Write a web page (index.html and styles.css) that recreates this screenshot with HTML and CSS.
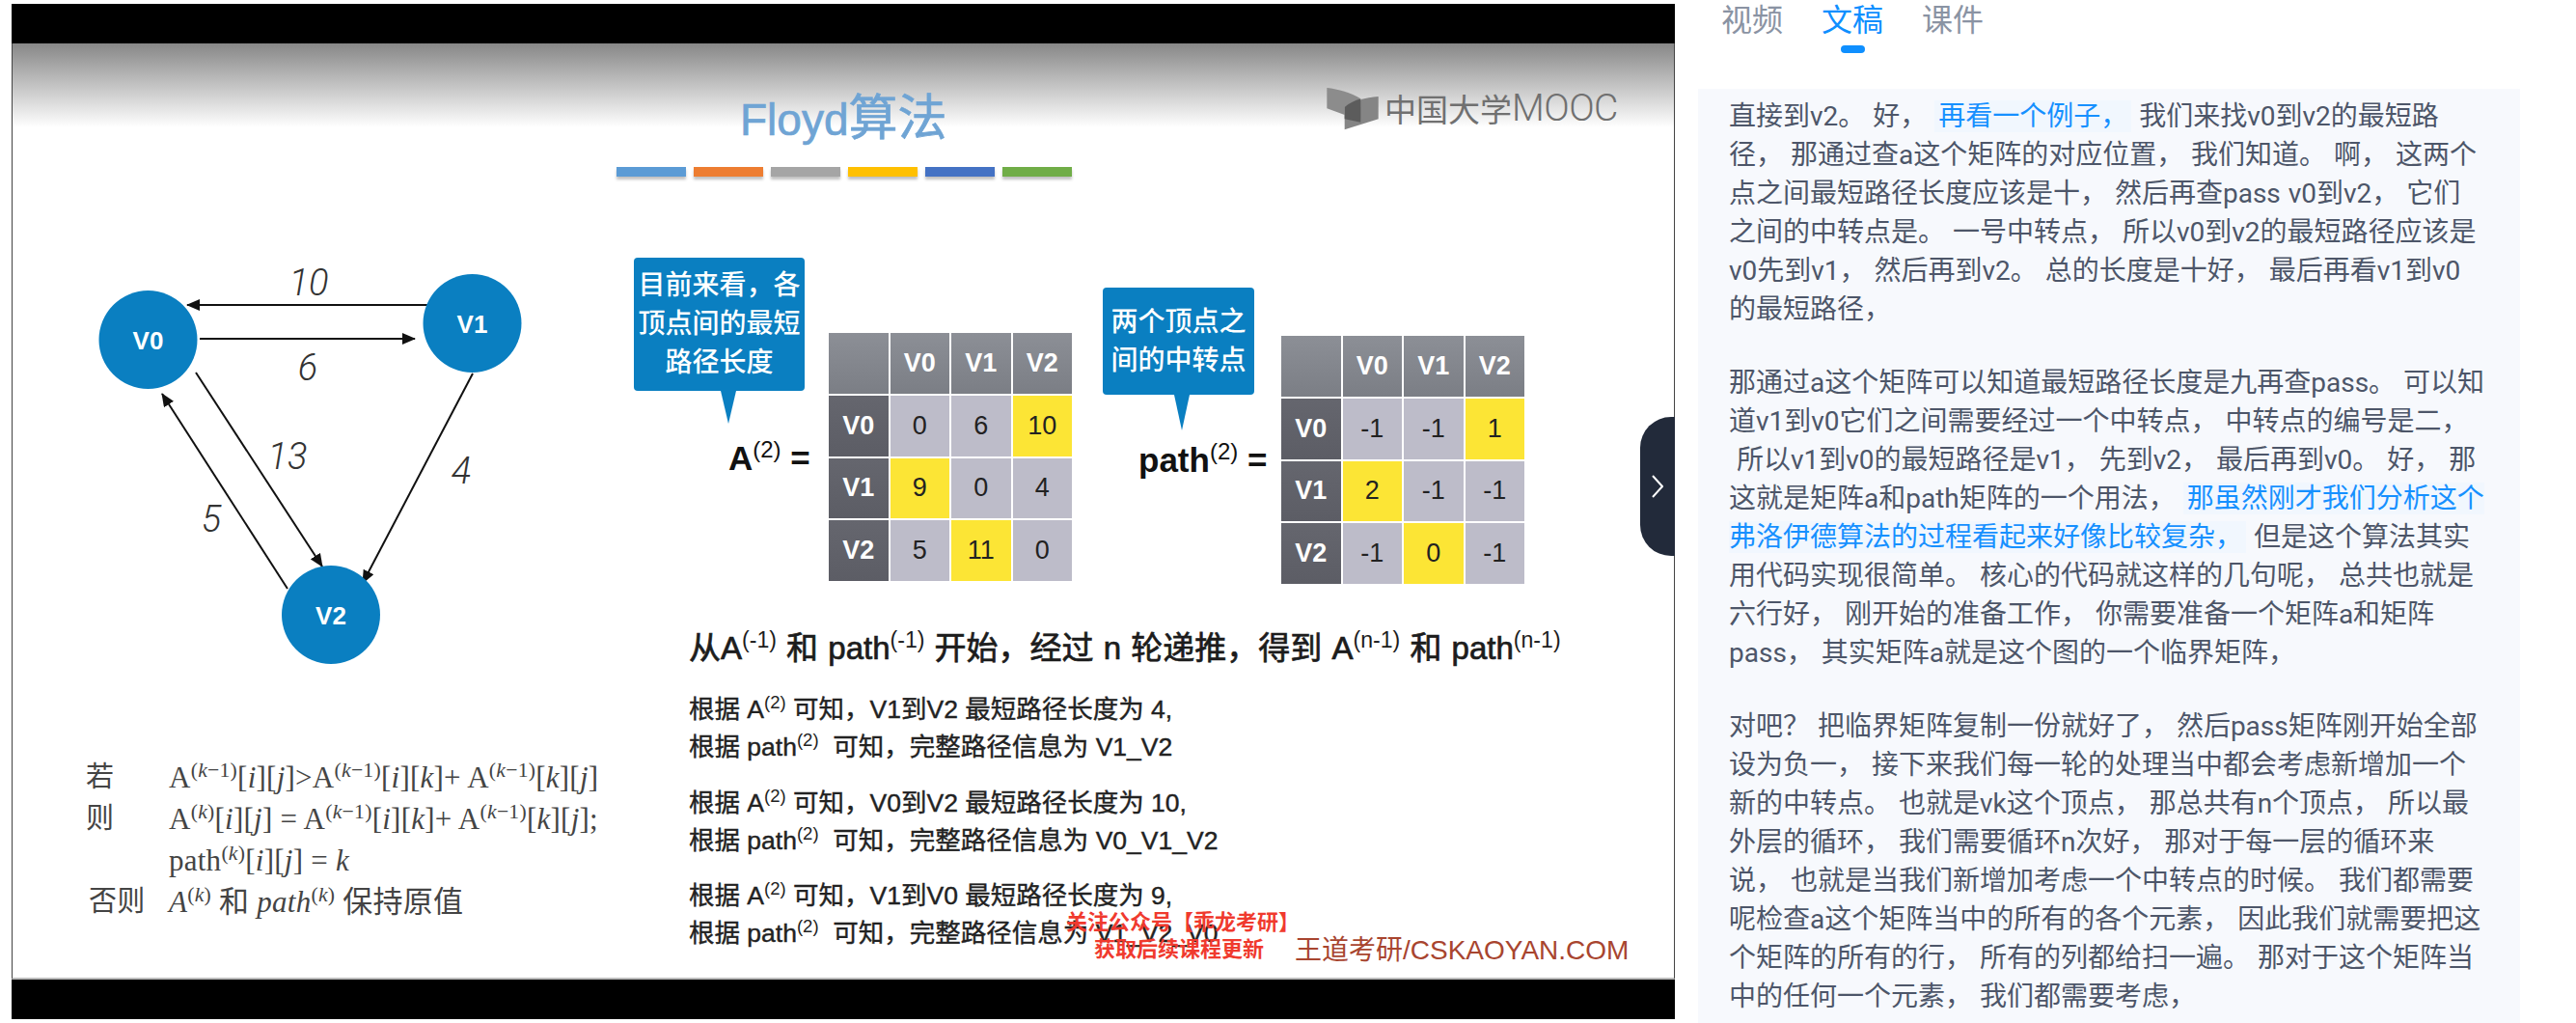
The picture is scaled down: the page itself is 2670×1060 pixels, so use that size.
FILE: index.html
```html
<!DOCTYPE html>
<html lang="zh-CN">

<head>
  <meta charset="UTF-8" />
  <title>Floyd算法 | 文稿</title>
  <link rel="stylesheet" href="styles.css">
</head>

<body>
  <div class="page">
    <div class="video">
      <div class="black-bar"></div>
      <div class="slide">
        <div class="title">Floyd<span class="title-cn">算法</span></div>
        <div class="stripes">
          <span class="stripe s-blue"></span>
          <span class="stripe s-orange"></span>
          <span class="stripe s-gray"></span>
          <span class="stripe s-yellow"></span>
          <span class="stripe s-navy"></span>
          <span class="stripe s-green"></span>
        </div>

        <div class="logo">
          <svg class="logo-icon" viewBox="45 55 160 135" width="54" height="45">
            <path d="M45 58 C80 62 120 72 150 92 L100 118 L100 142 L45 122 Z" fill="#8c8c8c" />
            <path d="M205 85 L205 155 L100 188 L100 118 C125 100 165 88 205 85 Z" fill="#858585" />
            <path d="M100 118 C115 106 132 97 150 92 L150 165 L100 155 Z" fill="#5c5c5c" />
          </svg>
          <span class="logo-cn">中国大学</span><span class="logo-en">MOOC</span>
        </div>

        <!-- graph: viewBox uses the same numbers as the screen -->
        <svg class="graph" viewBox="90 270 460 430" width="460" height="430">
          <defs>
            <marker id="head" viewBox="0 0 14 12" refX="13" refY="6" markerWidth="14" markerHeight="12"
              markerUnits="userSpaceOnUse" orient="auto">
              <path d="M0 0 L14 6 L0 12 Z" fill="#111" />
            </marker>
          </defs>
          <line class="edge" x1="445" y1="316" x2="194" y2="316" marker-end="url(#head)" />
          <line class="edge" x1="207" y1="351" x2="430" y2="351" marker-end="url(#head)" />
          <line class="edge" x1="203" y1="386" x2="334" y2="587" marker-end="url(#head)" />
          <line class="edge" x1="490" y1="387" x2="376" y2="604" marker-end="url(#head)" />
          <line class="edge" x1="298" y1="610" x2="168" y2="408" marker-end="url(#head)" />
          <circle class="node" cx="153.5" cy="352" r="51" />
          <circle class="node" cx="489.5" cy="335" r="51" />
          <circle class="node" cx="343" cy="637" r="51" />
          <text class="node-text" x="153.5" y="362">V0</text>
          <text class="node-text" x="489.5" y="345">V1</text>
          <text class="node-text" x="343" y="647">V2</text>
          <text class="weight" x="320" y="306">10</text>
          <text class="weight" x="319" y="394">6</text>
          <text class="weight" x="298" y="486">13</text>
          <text class="weight" x="478" y="501">4</text>
          <text class="weight" x="219" y="551">5</text>
        </svg>

        <div class="callout callout-a">
          <div>目前来看，各<br>顶点间的最短<br>路径长度</div>
        </div>
        <div class="callout callout-b">
          <div>两个顶点之<br>间的中转点</div>
        </div>

        <div class="eq eq-a">A<sup>(2)</sup> =</div>
        <div class="eq eq-path">path<sup>(2)</sup> =</div>

        <div class="matrix matrix-a">
          <div class="head"></div><div class="head">V0</div><div class="head">V1</div><div class="head">V2</div>
          <div class="side-head">V0</div><div class="cell">0</div><div class="cell">6</div><div class="cell hit">10</div>
          <div class="side-head">V1</div><div class="cell hit">9</div><div class="cell">0</div><div class="cell">4</div>
          <div class="side-head">V2</div><div class="cell">5</div><div class="cell hit">11</div><div class="cell">0</div>
        </div>
        <div class="matrix matrix-path">
          <div class="head"></div><div class="head">V0</div><div class="head">V1</div><div class="head">V2</div>
          <div class="side-head">V0</div><div class="cell">-1</div><div class="cell">-1</div><div class="cell hit">1</div>
          <div class="side-head">V1</div><div class="cell hit">2</div><div class="cell">-1</div><div class="cell">-1</div>
          <div class="side-head">V2</div><div class="cell">-1</div><div class="cell hit">0</div><div class="cell">-1</div>
        </div>

        <div class="headline">从A<sup>(-1)</sup> 和 path<sup>(-1)</sup> 开始，经过 n 轮递推，得到 A<sup>(n-1)</sup> 和 path<sup>(n-1)</sup></div>

        <div class="steps">
          <p>根据 A<sup>(2)</sup> 可知，V1到V2 最短路径长度为 4,<br>根据 path<sup>(2)</sup> &nbsp;可知，完整路径信息为 V1_V2</p>
          <p>根据 A<sup>(2)</sup> 可知，V0到V2 最短路径长度为 10,<br>根据 path<sup>(2)</sup> &nbsp;可知，完整路径信息为 V0_V1_V2</p>
          <p>根据 A<sup>(2)</sup> 可知，V1到V0 最短路径长度为 9,<br>根据 path<sup>(2)</sup> &nbsp;可知，完整路径信息为 V1_V2_V0</p>
        </div>

        <div class="formula">
          <div class="f-label">若</div>
          <div>A<sup>(<i>k</i>−1)</sup>[<i>i</i>][<i>j</i>]&gt;A<sup>(<i>k</i>−1)</sup>[<i>i</i>][<i>k</i>]+ A<sup>(<i>k</i>−1)</sup>[<i>k</i>][<i>j</i>]</div>
          <div class="f-label">则</div>
          <div>A<sup>(<i>k</i>)</sup>[<i>i</i>][<i>j</i>] = A<sup>(<i>k</i>−1)</sup>[<i>i</i>][<i>k</i>]+ A<sup>(<i>k</i>−1)</sup>[<i>k</i>][<i>j</i>];</div>
          <div class="f-label"></div>
          <div>path<sup>(<i>k</i>)</sup>[<i>i</i>][<i>j</i>] = <i>k</i></div>
          <div class="f-label f-else">否则</div>
          <div><i>A</i><sup>(<i>k</i>)</sup> 和 <i>path</i><sup>(<i>k</i>)</sup> 保持原值</div>
        </div>

        <div class="notice">关注公众号【乖龙考研】<br>获取后续课程更新</div>
        <div class="site">王道考研/CSKAOYAN.COM</div>
      </div>
      <div class="black-bar"></div>

      <div class="collapse">
        <svg viewBox="0 0 12 24" width="12" height="24">
          <path d="M1 1 L11 12 L1 23" fill="none" stroke="#fff" stroke-width="2" />
        </svg>
      </div>
    </div>

    <div class="side">
      <div class="tabs">
        <div class="tab">视频</div>
        <div class="tab active">文稿<span class="tab-mark"></span></div>
        <div class="tab">课件</div>
      </div>

      <div class="transcript">
        <p>直接到v2。 好， <span class="mark">再看一个例子，</span> 我们来找v0到v2的最短路<br>
          径， 那通过查a这个矩阵的对应位置， 我们知道。 啊， 这两个<br>
          点之间最短路径长度应该是十， 然后再查pass v0到v2， 它们<br>
          之间的中转点是。 一号中转点， 所以v0到v2的最短路径应该是<br>
          v0先到v1， 然后再到v2。 总的长度是十好， 最后再看v1到v0<br>
          的最短路径，</p>
        <p>那通过a这个矩阵可以知道最短路径长度是九再查pass。 可以知<br>
          道v1到v0它们之间需要经过一个中转点， 中转点的编号是二，<br>
          &nbsp;所以v1到v0的最短路径是v1， 先到v2， 最后再到v0。 好， 那<br>
          这就是矩阵a和path矩阵的一个用法， <span class="mark">那虽然刚才我们分析这个<br>
          弗洛伊德算法的过程看起来好像比较复杂，</span> 但是这个算法其实<br>
          用代码实现很简单。 核心的代码就这样的几句呢， 总共也就是<br>
          六行好， 刚开始的准备工作， 你需要准备一个矩阵a和矩阵<br>
          pass， 其实矩阵a就是这个图的一个临界矩阵，</p>
        <p>对吧？ 把临界矩阵复制一份就好了， 然后pass矩阵刚开始全部<br>
          设为负一， 接下来我们每一轮的处理当中都会考虑新增加一个<br>
          新的中转点。 也就是vk这个顶点， 那总共有n个顶点， 所以最<br>
          外层的循环， 我们需要循环n次好， 那对于每一层的循环来<br>
          说， 也就是当我们新增加考虑一个中转点的时候。 我们都需要<br>
          呢检查a这个矩阵当中的所有的各个元素， 因此我们就需要把这<br>
          个矩阵的所有的行， 所有的列都给扫一遍。 那对于这个矩阵当<br>
          中的任何一个元素， 我们都需要考虑，</p>
      </div>
    </div>
  </div>
</body>

</html>
```

FILE: styles.css
```css
body {
  margin: 0;
  background: #fff;
  font-family: "Liberation Sans", "Noto Sans CJK SC", sans-serif;
}

.page {
  display: flex;
  height: 1060px;
  overflow: hidden;
}

/* video column */
.video {
  position: relative;
  display: flex;
  flex-direction: column;
  width: 1724px;
  margin: 4px 0 4px 12px;
}

.black-bar {
  height: 41px;
  background: #000;
}

.slide {
  position: relative;
  height: 970px;
  box-sizing: border-box;
  border-left: 1px solid #444;
  border-right: 1px solid #444;
  border-bottom: 2px solid #bbb;
  background: linear-gradient(#878787 0, #fff 87px);
}

.title {
  position: absolute;
  left: 754px;
  top: 48px;
  font-size: 46px;
  line-height: 60px;
  color: #6fa4d4;
  -webkit-text-stroke: 0.7px #6fa4d4;
}

.title-cn {
  font-size: 51px;
}

.stripes {
  position: absolute;
  left: 626px;
  top: 128px;
  display: flex;
  gap: 8px;
}

.stripe {
  width: 72px;
  height: 10px;
  box-shadow: 0 3px 3px rgba(0, 0, 0, 0.25);
}

.s-blue { background: #5b9bd5; }
.s-orange { background: #ed7d31; }
.s-gray { background: #a5a5a5; }
.s-yellow { background: #ffc000; }
.s-navy { background: #4472c4; }
.s-green { background: #70ad47; }

.logo {
  position: absolute;
  left: 1362px;
  top: 43px;
  display: flex;
  align-items: center;
  color: #707070;
}

.logo-icon {
  margin-right: 6px;
}

.logo-cn {
  font-size: 33px;
}

.logo-en {
  font-family: Roboto, sans-serif;
  font-size: 39px;
  font-weight: 300;
  letter-spacing: -0.5px;
}

.graph {
  position: absolute;
  left: 77px;
  top: 225px;
}

.edge {
  stroke: #111;
  stroke-width: 2;
}

.node {
  fill: #0a7fc1;
}

.node-text {
  fill: #fff;
  font-size: 26px;
  font-weight: bold;
  text-anchor: middle;
}

.weight {
  fill: #333;
  font-family: Roboto, sans-serif;
  font-size: 38px;
  font-style: italic;
  font-weight: 300;
  text-anchor: middle;
}

.callout {
  position: absolute;
  display: flex;
  align-items: center;
  justify-content: center;
  border-radius: 4px;
  background: #0a7fc1;
  color: #fff;
  font-size: 28px;
  font-weight: 500;
  line-height: 40px;
  text-align: center;
  white-space: nowrap;
}

.callout::after {
  content: "";
  position: absolute;
  top: 100%;
  border-style: solid;
  border-color: #0a7fc1 transparent transparent;
}

.callout-a {
  left: 644px;
  top: 222px;
  width: 177px;
  height: 138px;
}

.callout-a::after {
  left: 90px;
  border-width: 34px 8px 0;
}

.callout-b {
  left: 1130px;
  top: 253px;
  width: 157px;
  height: 111px;
}

.callout-b::after {
  left: 74px;
  border-width: 37px 8px 0;
}

.eq {
  position: absolute;
  font-size: 35px;
  font-weight: bold;
  line-height: 60px;
  color: #111;
}

.eq sup {
  font-size: 24px;
  font-weight: normal;
  line-height: 0;
}

.eq-a {
  left: 742px;
  top: 400px;
}

.eq-path {
  left: 1167px;
  top: 402px;
}

.matrix {
  position: absolute;
  display: grid;
  grid-template-columns: repeat(4, 1fr);
  grid-template-rows: repeat(4, 1fr);
  gap: 2px;
  width: 252px;
  height: 257px;
  font-size: 27px;
}

.matrix > div {
  display: flex;
  align-items: center;
  justify-content: center;
}

.matrix-a {
  left: 846px;
  top: 300px;
}

.matrix-path {
  left: 1315px;
  top: 303px;
}

.head {
  background: linear-gradient(#8c8f96, #7b7e85);
  color: #fff;
  font-weight: bold;
}

.side-head {
  background: linear-gradient(#65666e, #5c5d65);
  color: #fff;
  font-weight: bold;
}

.cell {
  background: #bdbcc9;
  color: #222;
}

.cell.hit {
  background: #fce535;
}

.headline {
  position: absolute;
  left: 701px;
  top: 602px;
  font-size: 33px;
  line-height: 50px;
  word-spacing: 1px;
  color: #1c1c1c;
  white-space: nowrap;
  -webkit-text-stroke: 0.7px #1c1c1c;
}

.headline sup,
.steps sup {
  font-size: 70%;
  font-weight: normal;
  line-height: 0;
  -webkit-text-stroke: 0;
}

.steps {
  position: absolute;
  left: 701px;
  top: 671px;
  font-size: 26.5px;
  line-height: 39px;
  color: #222;
  white-space: nowrap;
  -webkit-text-stroke: 0.4px #222;
}

.steps p {
  margin: 0 0 18.5px;
}

.formula {
  position: absolute;
  left: 76px;
  top: 739px;
  display: grid;
  grid-template-columns: 86px auto;
  font-family: "Liberation Serif", "Noto Sans CJK SC", serif;
  font-size: 31px;
  line-height: 43px;
  letter-spacing: 0.25px;
  color: #444;
  white-space: nowrap;
}

.formula sup {
  font-size: 70%;
  line-height: 0;
}

.f-label {
  font-size: 29px;
}

.f-else {
  margin-left: 3px;
}

.notice {
  position: absolute;
  left: 1092px;
  top: 897px;
  width: 234px;
  font-size: 22px;
  font-weight: bold;
  line-height: 28px;
  color: #f03a2e;
  text-align: center;
  white-space: nowrap;
}

.site {
  position: absolute;
  left: 1329px;
  top: 920px;
  font-size: 28px;
  line-height: 40px;
  color: #a8452f;
  white-space: nowrap;
}

.collapse {
  position: absolute;
  top: 428px;
  right: 0;
  display: flex;
  align-items: center;
  justify-content: center;
  width: 36px;
  height: 144px;
  border-radius: 32px 0 0 32px;
  background: #222a3a;
}

/* transcript column */
.side {
  flex: 1;
  padding: 0 58px 0 24px;
  font-family: Roboto, "Noto Sans CJK SC", sans-serif;
}

.tabs {
  display: flex;
  gap: 40px;
  box-sizing: border-box;
  height: 92px;
  padding: 1px 0 0 24px;
}

.tab {
  display: flex;
  flex-direction: column;
  align-items: center;
  font-size: 32px;
  line-height: 40px;
  color: #8a93a3;
}

.tab.active {
  color: #0f8fff;
}

.tab-mark {
  width: 25px;
  height: 8px;
  margin-top: 6px;
  border-radius: 4px;
  background: #0f8fff;
}

.transcript {
  height: 968px;
  box-sizing: border-box;
  padding: 9px 0 0 32px;
  background: #f7f9fd;
  font-size: 28px;
  line-height: 40px;
  color: #4d5669;
  word-spacing: 1px;
  white-space: nowrap;
}

.transcript p {
  margin: 0 0 36px;
}

.mark {
  padding: 0 4px;
  background: #f1f7fe;
  color: #1690ff;
}
```
